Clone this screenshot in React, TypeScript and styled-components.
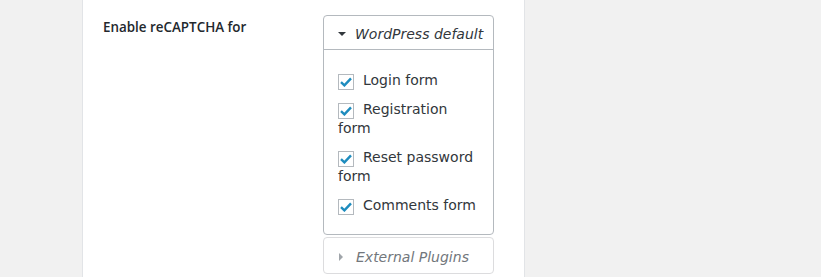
import React from "react";
import styled, { createGlobalStyle } from "styled-components";

const GlobalStyle = createGlobalStyle`
  html, body {
    margin: 0;
    padding: 0;
    background: #f1f1f1;
  }
  body {
    font-family: "Open Sans", "Noto Sans", "Liberation Sans", sans-serif;
    color: #23282d;
  }
`;

const items = [
  "Login form",
  "Registration form",
  "Reset password form",
  "Comments form",
];

const App = () => {
  return (
    <>
      <GlobalStyle />
      <Page>
        <Gutter />
        <Panel>
          <Row>
            <Label>Enable reCAPTCHA for</Label>
            <Field>
              <Section>
                <SectionHeader>
                  <Arrow $open />
                  <Title>WordPress default</Title>
                </SectionHeader>
                <SectionBody>
                  {items.map((item) => (
                    <Option key={item}>
                      <Check>
                        <svg width="12" height="10" viewBox="0 0 12 10">
                          <path
                            d="M1 5.2 L4.4 8.4 L11 1.4"
                            fill="none"
                            stroke="#1e8cbe"
                            strokeWidth="2.4"
                          />
                        </svg>
                      </Check>
                      {item}
                    </Option>
                  ))}
                </SectionBody>
              </Section>
              <Section $muted>
                <SectionHeader $muted>
                  <Arrow />
                  <Title $muted>External Plugins</Title>
                </SectionHeader>
              </Section>
            </Field>
          </Row>
        </Panel>
        <Rest />
      </Page>
    </>
  );
};

export default App;

// Styles

const Page = styled.div`
  display: flex;
  height: 100vh;
  overflow: hidden;
`;

const Gutter = styled.div`
  width: 82px;
  flex-shrink: 0;
  background: #f1f1f1;
  border-right: 1px solid #e2e4e7;
`;

const Panel = styled.div`
  width: 442px;
  flex-shrink: 0;
  background: #fff;
  border-right: 1px solid #e2e4e7;
  padding: 15px 0 0 20px;
  box-sizing: border-box;
`;

const Rest = styled.div`
  flex: 1;
  background: #f1f1f1;
`;

const Row = styled.div`
  display: flex;
  align-items: flex-start;
`;

const Label = styled.div`
  width: 220px;
  flex-shrink: 0;
  font-size: 13.4px;
  font-weight: 600;
  line-height: 1.4;
  padding-top: 3px;
  color: #23282d;
`;

const Field = styled.div`
  width: 171px;
  display: flex;
  flex-direction: column;
  gap: 2px;
`;

const Section = styled.div<{ $muted?: boolean }>`
  border: 1px solid ${(p) => (p.$muted ? "#dcdcde" : "#b4b9be")};
  border-radius: 4px;
  background: #fff;
`;

const SectionHeader = styled.div<{ $muted?: boolean }>`
  display: flex;
  align-items: center;
  box-sizing: border-box;
  height: ${(p) => (p.$muted ? "35px" : "34px")};
  padding: 2px 0 0 14px;
  border-bottom: ${(p) => (p.$muted ? "none" : "1px solid #b4b9be")};
`;

const Arrow = styled.span<{ $open?: boolean }>`
  width: 0;
  height: 0;
  margin-right: ${(p) => (p.$open ? "9px" : "13px")};
  ${(p) =>
    p.$open
      ? `
    border-left: 4px solid transparent;
    border-right: 4px solid transparent;
    border-top: 4px solid #32373c;
  `
      : `
    margin-left: 1px;
    border-top: 4px solid transparent;
    border-bottom: 4px solid transparent;
    border-left: 4px solid #a0a5aa;
  `}
`;

const Title = styled.span<{ $muted?: boolean }>`
  font-family: "DejaVu Sans", "Open Sans", sans-serif;
  font-size: 14px;
  font-style: italic;
  color: ${(p) => (p.$muted ? "#72777c" : "#32373c")};
`;

const SectionBody = styled.div`
  padding: 21px 14px 19px;
  display: flex;
  flex-direction: column;
  gap: 10px;
`;

const Option = styled.div`
  font-family: "DejaVu Sans", "Open Sans", sans-serif;
  font-size: 14px;
  line-height: 19px;
  color: #32373c;
`;

const Check = styled.span`
  display: inline-flex;
  align-items: center;
  justify-content: center;
  width: 16px;
  height: 16px;
  box-sizing: border-box;
  border: 1px solid #b4b9be;
  background: #fff;
  vertical-align: -2px;
  margin-right: 9px;
`;
